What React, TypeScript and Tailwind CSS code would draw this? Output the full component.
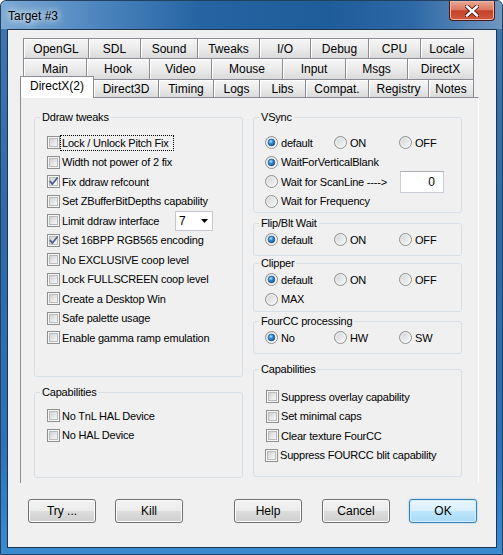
import React from "react"

type TabDef = { label: string; w: string; noLeft?: boolean }

const rowOne: TabDef[] = [
  { label: "OpenGL", w: "w-[65px]" },
  { label: "SDL", w: "w-[52px]" },
  { label: "Sound", w: "w-[57px]" },
  { label: "Tweaks", w: "w-[62px]" },
  { label: "I/O", w: "w-[51px]" },
  { label: "Debug", w: "w-[58px]" },
  { label: "CPU", w: "w-[52px]" },
  { label: "Locale", w: "w-[54px]" },
]

const rowTwo: TabDef[] = [
  { label: "Main", w: "w-[63px]" },
  { label: "Hook", w: "w-[63px]" },
  { label: "Video", w: "w-[62px]" },
  { label: "Mouse", w: "w-[71px]" },
  { label: "Input", w: "w-[63px]" },
  { label: "Msgs", w: "w-[62px]" },
  { label: "DirectX", w: "w-[67px]" },
]

const rowThree: TabDef[] = [
  { label: "Direct3D", w: "w-[64px]", noLeft: true },
  { label: "Timing", w: "w-[55px]" },
  { label: "Logs", w: "w-[46px]" },
  { label: "Libs", w: "w-[46px]" },
  { label: "Compat.", w: "w-[63px]" },
  { label: "Registry", w: "w-[60px]" },
  { label: "Notes", w: "w-[46px]" },
]

const ddraw: { label: string; checked?: boolean; focus?: boolean; combo?: boolean }[] = [
  { label: "Lock / Unlock Pitch Fix", focus: true },
  { label: "Width not power of 2 fix" },
  { label: "Fix ddraw refcount", checked: true },
  { label: "Set ZBufferBitDepths capability" },
  { label: "Limit ddraw interface", combo: true },
  { label: "Set 16BPP RGB565 encoding", checked: true },
  { label: "No EXCLUSIVE coop level" },
  { label: "Lock FULLSCREEN coop level" },
  { label: "Create a Desktop Win" },
  { label: "Safe palette usage" },
  { label: "Enable gamma ramp emulation" },
]

const sans = "font-['Liberation_Sans',Arial,sans-serif] text-[11px] tracking-[-0.2px] text-black"
const arial = "font-['Liberation_Sans',Arial,sans-serif] text-[12px] tracking-normal text-black"

function Tab({ tab, last, h }: { tab: TabDef; last?: boolean; h: string }) {
  return (
    <div
      className={`${tab.w} ${h} flex items-center justify-center border-t border-[#898c95] bg-[linear-gradient(#f6f6f6_0%,#ebebeb_50%,#dadada_100%)] shadow-[inset_1px_1px_0_#ffffff] ${
        tab.noLeft ? "" : "border-l"
      } ${last ? "border-r" : ""} ${arial}`}
    >
      {tab.label}
    </div>
  )
}

function Check({ checked }: { checked?: boolean }) {
  return (
    <span className="relative flex size-[13px] flex-none items-center justify-center border border-[#8e8f8f] bg-[#f6f6f6]">
      <span className="size-[9px] border border-[#b9bbbd] bg-[linear-gradient(135deg,#d0d2d4_0%,#e6e7e8_55%,#f8f8f8_100%)]" />
      {checked && (
        <svg className="absolute left-0 top-0" width="11" height="11" viewBox="0 0 11 11">
          <path
            d="M2.2 5.4 L4.4 8.1 L9.2 1.9"
            fill="none"
            stroke="#4a5e8f"
            strokeWidth="1.7"
            strokeLinecap="round"
            strokeLinejoin="round"
          />
        </svg>
      )}
    </span>
  )
}

function Radio({ on }: { on?: boolean }) {
  return (
    <svg width="13" height="13" viewBox="0 0 13 13" className="flex-none">
      <circle cx="6.5" cy="6.5" r="6" fill="url(#radioFace)" stroke="#8e8f8f" />
      <circle cx="6.5" cy="6.5" r="4.7" fill="none" stroke="#ffffff" strokeOpacity="0.55" />
      {on && <circle cx="6.5" cy="6.5" r="3.4" fill="url(#radioDot)" stroke="#23507c" strokeWidth="0.6" />}
    </svg>
  )
}

function CheckRow({
  label,
  checked,
  focus,
  children,
  className = "",
}: {
  label: string
  checked?: boolean
  focus?: boolean
  children?: React.ReactNode
  className?: string
}) {
  return (
    <div className={`flex h-[19.5px] items-center ${className}`}>
      <Check checked={checked} />
      <span
        className={`border px-[1px] leading-[14px] ${
          focus ? "border-dotted border-black pr-[4px]" : "border-transparent"
        }`}
      >
        {label}
      </span>
      {children}
    </div>
  )
}

function RadioItem({ label, on, w = "" }: { label: string; on?: boolean; w?: string }) {
  return (
    <div className={`flex items-center gap-[3px] ${w}`}>
      <Radio on={on} />
      <span className="leading-[14px]">{label}</span>
    </div>
  )
}

function Group({
  title,
  h,
  className = "",
  children,
}: {
  title: string
  h: string
  className?: string
  children: React.ReactNode
}) {
  return (
    <fieldset className={`${h} rounded-[3px] border border-[#d5dfe5] ${className}`}>
      <legend className="ml-[5px] px-[2px] leading-[14px]">{title}</legend>
      {children}
    </fieldset>
  )
}

function Btn({ label, primary, className = "" }: { label: string; primary?: boolean; className?: string }) {
  return (
    <button
      className={`flex h-[24px] w-[68px] flex-none items-center justify-center rounded-[3px] border ${arial} ${
        primary
          ? "border-[#3c7fb1] bg-[linear-gradient(#e9f6fd_0%,#d8effc_50%,#bde6fd_50%,#a9daf6_100%)] shadow-[inset_0_0_0_1px_#d2efff,0_0_2px_#6fc3f0]"
          : "border-[#707070] bg-[linear-gradient(#f3f3f3_0%,#ebebeb_50%,#dddddd_50%,#cfcfcf_100%)] shadow-[inset_0_0_0_1px_#fbfbfb]"
      } ${className}`}
    >
      {label}
    </button>
  )
}

export default function App() {
  return (
    <div className="flex h-[555px] w-[503px] flex-col overflow-hidden rounded-t-[6px] border border-[#24405f] bg-[linear-gradient(#3f78b1_0%,#2e6aa6_40%,#2b72b8_80%,#3a8ad0_100%)]">
      <svg width="0" height="0" className="block">
        <defs>
          <linearGradient id="radioFace" x1="0" y1="0" x2="1" y2="1">
            <stop offset="0" stopColor="#cdd0d3" />
            <stop offset="1" stopColor="#fbfbfb" />
          </linearGradient>
          <radialGradient id="radioDot" cx="0.4" cy="0.35" r="0.7">
            <stop offset="0" stopColor="#b4e6ff" />
            <stop offset="0.45" stopColor="#2f8ad2" />
            <stop offset="1" stopColor="#124e86" />
          </radialGradient>
        </defs>
      </svg>

      {/* title bar */}
      <div className="flex h-[28px] flex-none items-start justify-between bg-[linear-gradient(to_right,#7eaad4_0%,#4f88c0_18%,#2563a2_40%,#1f5c9a_65%,#2d68a5_82%,#7097c1_100%)]">
        <span className="ml-[7px] mt-[7px] font-['Liberation_Sans',Arial,sans-serif] text-[12px] leading-[16px] text-black [text-shadow:0_0_6px_#ffffff,0_0_10px_#ffffff]">
          Target #3
        </span>
        <div className="mr-[7px] flex h-[20px] w-[46px] items-center justify-center rounded-b-[4px] border border-t-0 border-[#4a1a14] bg-[linear-gradient(#eaa896_0%,#dc7860_45%,#c5412a_52%,#d05a3e_100%)] shadow-[inset_0_0_0_1px_#efb4a4]">
          <svg width="14" height="12" viewBox="0 0 14 12">
            <path d="M2 1.5 L12 10.5 M12 1.5 L2 10.5" stroke="#4d1c15" strokeWidth="4.2" strokeLinecap="square" />
            <path d="M2 1.5 L12 10.5 M12 1.5 L2 10.5" stroke="#ffffff" strokeWidth="2.4" strokeLinecap="square" />
          </svg>
        </div>
      </div>

      {/* client area */}
      <div className={`mb-[6px] ml-[6px] mr-[5px] flex flex-1 flex-col border border-[#1f3650] bg-[#f0f0f0] pt-[8px] ${sans}`}>
        <div className="ml-[15px] flex h-[20px]">
          {rowOne.map((t, i) => (
            <Tab key={t.label} tab={t} h="h-[20px]" last={i === rowOne.length - 1} />
          ))}
        </div>
        <div className="ml-[15px] flex h-[21px]">
          {rowTwo.map((t, i) => (
            <Tab key={t.label} tab={t} h="h-[21px]" last={i === rowTwo.length - 1} />
          ))}
        </div>
        <div className="ml-[12px] flex h-[18px] items-start">
          <div
            className={`relative z-10 -mt-[3px] flex h-[22px] w-[74px] items-center justify-center border-l border-r border-t border-[#898c95] bg-white pb-[3px] ${arial}`}
          >
            DirectX(2)
          </div>
          {rowThree.map((t, i) => (
            <Tab key={t.label} tab={t} h="h-[18px]" last={i === rowThree.length - 1} />
          ))}
        </div>

        {/* tab page */}
        <div className="ml-[12px] flex h-[386px] w-[459px] gap-[10px] border-l border-r border-t border-l-[#898c95] border-r-white border-t-[#898c95] pl-[13px] pt-[12px]">
          <div className="flex w-[209px] flex-col">
            <Group title="Ddraw tweaks" h="h-[267px]">
              <div className="pl-[12px] pt-[9px]">
                {ddraw.map((r) => (
                  <CheckRow key={r.label} label={r.label} checked={r.checked} focus={r.focus}>
                    {r.combo && (
                      <div className="ml-auto mr-[29px] flex h-[20px] w-[38px] items-center justify-between border border-[#c5c9cf] bg-white pl-[3px] pr-[4px]">
                        <span className={arial}>7</span>
                        <svg width="7" height="4" viewBox="0 0 7 4">
                          <path d="M0 0 H7 L3.5 4 Z" fill="#000000" />
                        </svg>
                      </div>
                    )}
                  </CheckRow>
                ))}
              </div>
            </Group>
            <Group title="Capabilities" h="h-[93px]" className="mt-[8px]">
              <div className="pl-[12px] pt-[7px]">
                <CheckRow label="No TnL HAL Device" />
                <CheckRow label="No HAL Device" />
              </div>
            </Group>
          </div>

          <div className="flex w-[209px] flex-col">
            <Group title="VSync" h="h-[103px]">
              <div className="pl-[11px] pt-[9px]">
                <div className="flex h-[19.5px] items-center">
                  <RadioItem label="default" on w="w-[69px]" />
                  <RadioItem label="ON" w="w-[65px]" />
                  <RadioItem label="OFF" />
                </div>
                <div className="flex h-[19.5px] items-center">
                  <RadioItem label="WaitForVerticalBlank" on />
                </div>
                <div className="flex h-[19.5px] items-center">
                  <RadioItem label="Wait for ScanLine ---->" />
                  <div className="ml-auto mr-[17px] flex h-[22px] w-[44px] items-center justify-end border border-[#c9ced6] border-t-[#abadb3] bg-white pr-[8px]">
                    <span className={arial}>0</span>
                  </div>
                </div>
                <div className="flex h-[19.5px] items-center">
                  <RadioItem label="Wait for Frequency" />
                </div>
              </div>
            </Group>
            <Group title="Flip/Blt Wait" h="h-[40px]" className="mt-[3px]">
              <div className="flex h-[19.5px] items-center pl-[11px]">
                <RadioItem label="default" on w="w-[69px]" />
                <RadioItem label="ON" w="w-[65px]" />
                <RadioItem label="OFF" />
              </div>
            </Group>
            <Group title="Clipper" h="h-[56px]">
              <div className="pl-[11px]">
                <div className="flex h-[19.5px] items-center">
                  <RadioItem label="default" on w="w-[69px]" />
                  <RadioItem label="ON" w="w-[65px]" />
                  <RadioItem label="OFF" />
                </div>
                <div className="flex h-[19.5px] items-center">
                  <RadioItem label="MAX" />
                </div>
              </div>
            </Group>
            <Group title="FourCC processing" h="h-[40px]" className="mt-[2px]">
              <div className="flex h-[19.5px] items-center pl-[11px]">
                <RadioItem label="No" on w="w-[69px]" />
                <RadioItem label="HW" w="w-[65px]" />
                <RadioItem label="SW" />
              </div>
            </Group>
            <Group title="Capabilities" h="h-[115px]" className="mt-[8px]">
              <div className="pl-[12px] pt-[11px]">
                <CheckRow label="Suppress overlay capability" />
                <CheckRow label="Set minimal caps" />
                <CheckRow label="Clear texture FourCC" />
                <CheckRow label="Suppress FOURCC blit capability" className="-ml-[1px]" />
              </div>
            </Group>
          </div>
        </div>

        {/* buttons */}
        <div className="mt-[16px] flex pl-[20px]">
          <Btn label="Try ..." />
          <Btn label="Kill" className="ml-[19px]" />
          <Btn label="Help" className="ml-[51px]" />
          <Btn label="Cancel" className="ml-[20px]" />
          <Btn label="OK" primary className="ml-[19px]" />
        </div>
      </div>
    </div>
  )
}
